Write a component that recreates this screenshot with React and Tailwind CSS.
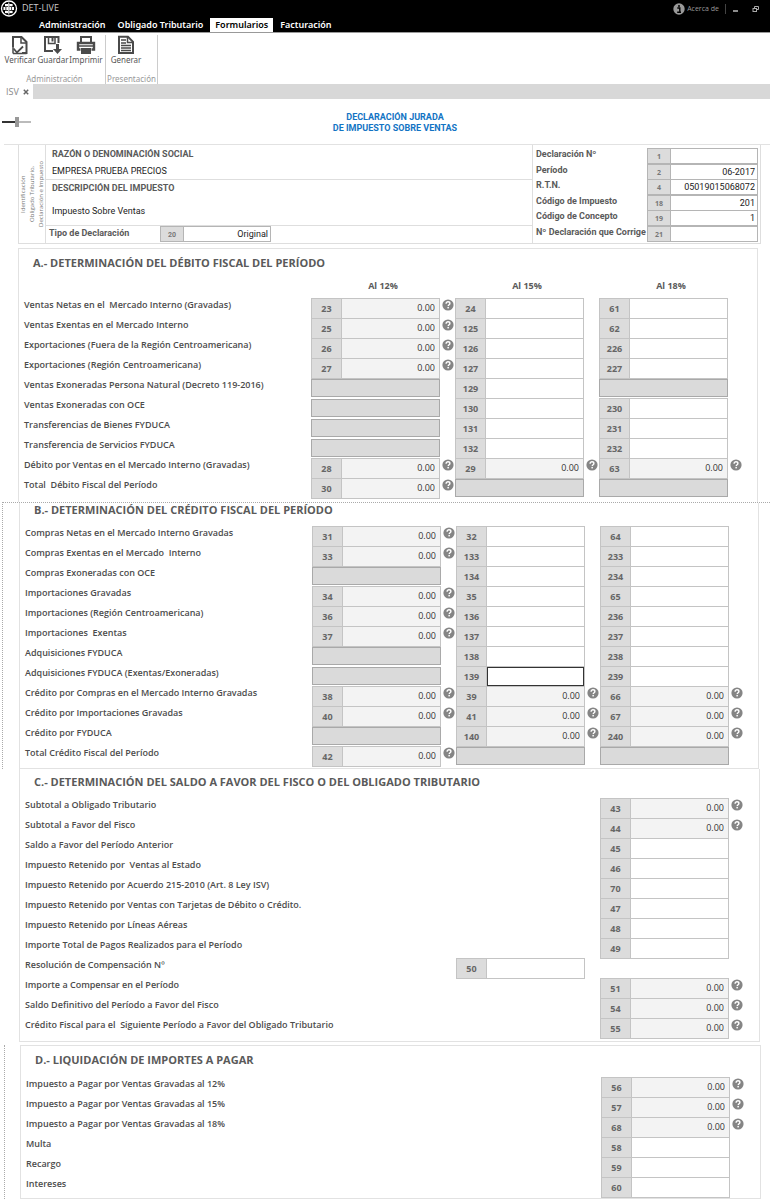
import React from "react";

/* Cell notation: "" = nothing, "X" = blocked, "24" = editable box, "23*" = calculated box with help. */
const SECTION_A = [
  ["Ventas Netas en el  Mercado Interno (Gravadas)", "23*", "24", "61"],
  ["Ventas Exentas en el Mercado Interno", "25*", "125", "62"],
  ["Exportaciones (Fuera de la Región Centroamericana)", "26*", "126", "226"],
  ["Exportaciones (Región Centroamericana)", "27*", "127", "227"],
  ["Ventas Exoneradas Persona Natural (Decreto 119-2016)", "X", "129", "X"],
  ["Ventas Exoneradas con OCE", "X", "130", "230"],
  ["Transferencias de Bienes FYDUCA", "X", "131", "231"],
  ["Transferencia de Servicios FYDUCA", "X", "132", "232"],
  ["Débito por Ventas en el Mercado Interno (Gravadas)", "28*", "29*", "63*"],
  ["Total  Débito Fiscal del Período", "30*", "X", "X"],
];

const SECTION_B = [
  ["Compras Netas en el Mercado Interno Gravadas", "31*", "32", "64"],
  ["Compras Exentas en el Mercado  Interno", "33*", "133", "233"],
  ["Compras Exoneradas con OCE", "X", "134", "234"],
  ["Importaciones Gravadas", "34*", "35", "65"],
  ["Importaciones (Región Centroamericana)", "36*", "136", "236"],
  ["Importaciones  Exentas", "37*", "137", "237"],
  ["Adquisiciones FYDUCA", "X", "138", "238"],
  ["Adquisiciones FYDUCA (Exentas/Exoneradas)", "X", "139", "239"],
  ["Crédito por Compras en el Mercado Interno Gravadas", "38*", "39*", "66*"],
  ["Crédito por Importaciones Gravadas", "40*", "41*", "67*"],
  ["Crédito por FYDUCA", "X", "140*", "240*"],
  ["Total Crédito Fiscal del Período", "42*", "X", "X"],
];

const SECTION_C = [
  ["Subtotal a Obligado Tributario", "", "", "43*"],
  ["Subtotal a Favor del Fisco", "", "", "44*"],
  ["Saldo a Favor del Período Anterior", "", "", "45"],
  ["Impuesto Retenido por  Ventas al Estado", "", "", "46"],
  ["Impuesto Retenido por Acuerdo 215-2010 (Art. 8 Ley ISV)", "", "", "70"],
  ["Impuesto Retenido por Ventas con Tarjetas de Débito o Crédito.", "", "", "47"],
  ["Impuesto Retenido por Líneas Aéreas", "", "", "48"],
  ["Importe Total de Pagos Realizados para el Período", "", "", "49"],
  ["Resolución de Compensación Nº", "", "50", ""],
  ["Importe a Compensar en el Período", "", "", "51*"],
  ["Saldo Definitivo del Período a Favor del Fisco", "", "", "54*"],
  ["Crédito Fiscal para el  Siguiente Período a Favor del Obligado Tributario", "", "", "55*"],
];

const SECTION_D = [
  ["Impuesto a Pagar por Ventas Gravadas al 12%", "", "", "56*"],
  ["Impuesto a Pagar por Ventas Gravadas al 15%", "", "", "57*"],
  ["Impuesto a Pagar por Ventas Gravadas al 18%", "", "", "68*"],
  ["Multa", "", "", "58"],
  ["Recargo", "", "", "59"],
  ["Intereses", "", "", "60"],
];

const HEADER_FIELDS = [
  ["Declaración Nº", "1", ""],
  ["Período", "2", "06-2017"],
  ["R.T.N.", "4", "05019015068072"],
  ["Código de Impuesto", "18", "201"],
  ["Código de Concepto", "19", "1"],
  ["Nº Declaración que Corrige", "21", ""],
];

function HelpIcon() {
  return (
    <svg viewBox="0 0 12 12" className="size-3">
      <circle cx="6" cy="6" r="5.6" fill="#858585" />
      <path d="M4.1 4.7C4.1 3.4 5 2.8 6 2.8s1.9.6 1.9 1.6c0 1.3-1.7 1.3-1.7 2.6" fill="none" stroke="#fff" strokeWidth="1.4" />
      <rect x="5.4" y="7.9" width="1.5" height="1.5" fill="#fff" />
    </svg>
  );
}

function Cell({ spec }) {
  if (!spec) return null;
  if (spec === "X") {
    return (
      <div className="h-5 pt-px">
        <div className="h-[18px] w-[129px] border border-[#a9a9a9] bg-[#dadada]" />
      </div>
    );
  }
  const calculated = spec.endsWith("*");
  const code = spec.replace("*", "");
  const focus = code === "139";
  return (
    <div className="flex h-[21px] items-start">
      <div className="flex h-[21px] w-[129px] border border-[#c4c4c4]">
        <label
          htmlFor={"c" + code}
          className="w-[30px] shrink-0 border-r border-[#c4c4c4] bg-[#dcdcdc] pt-px text-center text-[9px] leading-[18px] font-bold text-[#666]"
        >
          {code}
        </label>
        <input
          id={"c" + code}
          type="text"
          readOnly={calculated}
          defaultValue={calculated ? "0.00" : ""}
          className={
            "min-w-0 flex-1 pr-1 pb-0.5 text-right text-[9px] leading-4 text-[#333] outline-none " +
            (calculated ? "bg-[#f3f3f3]" : focus ? "border border-[#333] bg-white" : "bg-white")
          }
        />
      </div>
      {calculated && (
        <button type="button" aria-label={"Ayuda casilla " + code} className="mt-px ml-0.5">
          <HelpIcon />
        </button>
      )}
    </div>
  );
}

function FieldTable({ rows, columns }) {
  return (
    <table className="w-full table-fixed border-collapse">
      <colgroup>
        <col />
        <col className="w-36" />
        <col className="w-36" />
        <col className="w-36" />
      </colgroup>
      {columns && (
        <thead>
          <tr className="h-[21px] align-top text-[9px] leading-[18px]">
            <td />
            {columns.map((c) => (
              <th key={c} scope="col" className="p-0 font-bold">
                {c}
              </th>
            ))}
          </tr>
        </thead>
      )}
      <tbody>
        {rows.map(([label, ...cells]) => (
          <tr key={label} className="h-5 align-top">
            <th scope="row" className="p-0 text-left text-[9px] leading-[14px] font-semibold whitespace-pre text-[#4c4c4c]">
              {label}
            </th>
            {cells.map((c, i) => (
              <td key={i} className="h-5 p-0">
                <div className="h-5">
                  <Cell spec={c} />
                </div>
              </td>
            ))}
          </tr>
        ))}
      </tbody>
    </table>
  );
}

function HeaderBox({ id, code, value }) {
  return (
    <div className="flex h-4 w-[111px] border border-[#b5b5b5]">
      <label htmlFor={id} className="w-[23px] shrink-0 border-r border-[#b5b5b5] bg-[#dcdcdc] pt-px text-center text-[7px] leading-[14px] font-bold text-[#777]">
        {code}
      </label>
      <input id={id} type="text" defaultValue={value} className="min-w-0 flex-1 bg-white pr-0.5 text-right font-[Roboto,sans-serif] text-[9px] leading-[14px] text-[#222] outline-none" />
    </div>
  );
}

const RIBBON_ICONS = {
  Verificar: (
    <g fill="none" stroke="#4a4a4a" strokeWidth="2">
      <path d="M3 12V2h8.500l5 5v11H12" />
      <path d="M11 2v6h5.500" strokeWidth="1.500" />
      <path d="M3 18.500h13.500M3 12v6.500" strokeWidth="1.500" />
      <path d="M3.500 13.500l3.500 4 6-6" strokeWidth="1.800" />
    </g>
  ),
  Guardar: (
    <g fill="none" stroke="#4a4a4a" strokeWidth="2">
      <path d="M10 16H2V2h13.500v6" />
      <path d="M5.500 2v6.500h6.500V2" strokeWidth="1.500" />
      <path d="M9.500 3v3.500" />
      <path d="M14.500 9v7" strokeWidth="3" />
      <path d="M10 14h9l-4.500 5z" fill="#4a4a4a" stroke="none" />
    </g>
  ),
  Imprimir: (
    <g fill="none" stroke="#4a4a4a" strokeWidth="2">
      <path d="M5 7V2h10v5" />
      <path d="M4.500 14.500H2V8h16v6.500h-2.500" strokeWidth="2.400" />
      <path d="M3 11h14" strokeWidth="1.500" />
      <rect x="5" y="13" width="10" height="6" fill="#4a4a4a" stroke="none" />
    </g>
  ),
  Generar: (
    <g fill="none" stroke="#4a4a4a" strokeWidth="2">
      <path d="M3 1.800h9l5 5V18H3z" />
      <path d="M11.500 2v5.500H17" strokeWidth="1.500" />
      <path d="M5 5h5M5 8h5M5 10.500h10M5 13h10M5 15.500h10" strokeWidth="1.300" />
    </g>
  ),
};

function RibbonButton({ name, className }) {
  return (
    <button type="button" className={"flex flex-col items-center text-[8px] leading-[10px] text-[#555] " + className}>
      <svg viewBox="0 0 20 20" className="size-5">
        {RIBBON_ICONS[name]}
      </svg>
      {name}
    </button>
  );
}

export default function App() {
  return (
    <div className="min-h-screen overflow-x-hidden bg-white font-['Open_Sans','Noto_Sans',sans-serif] text-[#5a5a5a]">
      <header className="border-b border-[#999] bg-black text-white">
        <div className="flex h-[18px] items-start">
          <svg viewBox="0 0 18 18" className="h-[18px] w-[18px]">
            <circle cx="9" cy="8.500" r="7.500" fill="none" stroke="#fff" strokeWidth="1.300" />
            <g fill="#fff">
              <rect x="5" y="4" width="3.300" height="2.300" />
              <rect x="9.300" y="4" width="3.300" height="2.300" />
              <rect x="3.500" y="7" width="2" height="3" />
              <rect x="6.300" y="7" width="2" height="3" />
              <rect x="9.300" y="7" width="2" height="3" />
              <rect x="12" y="7" width="2" height="3" />
              <rect x="5" y="10.800" width="3.300" height="2.300" />
              <rect x="9.300" y="10.800" width="3.300" height="2.300" />
              <rect x="8.300" y="2.500" width="1" height="12" />
            </g>
          </svg>
          <span className="ml-1 text-[9px] leading-4 text-[#ccc]">DET-LIVE</span>
          <div className="ml-auto flex h-[18px] items-center pr-2.5 text-[#999]">
            <button type="button" className="flex items-center gap-0.5 text-[7px] leading-4">
              <svg viewBox="0 0 12 12" className="size-3">
                <circle cx="6" cy="6" r="5.700" fill="#999" />
                <path d="M4.300 5h2.500v4M4.200 9.300h3.800" fill="none" stroke="#000" strokeWidth="1.400" />
                <circle cx="6" cy="2.900" r="1" fill="#000" />
              </svg>
              Acerca de
            </button>
            <span className="mx-1.5 h-2.5 w-px bg-[#444]" />
            <button type="button" aria-label="Minimizar" className="mr-3">
              <svg viewBox="0 0 8 8" className="size-2">
                <path d="M1 6h5" stroke="#bbb" strokeWidth="1.500" />
              </svg>
            </button>
            <button type="button" aria-label="Restaurar">
              <svg viewBox="0 0 8 8" className="size-2" fill="none" stroke="#aaa">
                <path d="M2.500 3V1.500h4v3H5" />
                <rect x="1" y="3.500" width="3.500" height="3" />
              </svg>
            </button>
          </div>
        </div>
        <nav className="flex h-3.5 items-center gap-0.5 pl-[34px] font-['Noto_Sans',sans-serif] text-[9px] leading-[14px] font-semibold">
          <a href="#administracion" className="px-[5px]">Administración</a>
          <a href="#obligado" className="px-[5px]">Obligado Tributario</a>
          <a href="#formularios" className="bg-white px-[5px] text-black">Formularios</a>
          <a href="#facturacion" className="px-[5px]">Facturación</a>
        </nav>
      </header>

      <div className="flex h-[51px] pt-0.5 font-['Noto_Sans',sans-serif] text-[#999]">
        <div className="flex w-[106px] flex-col justify-between border-r border-[#ccc] pl-1">
          <div className="flex gap-0.5">
            <RibbonButton name="Verificar" className="w-8" />
            <RibbonButton name="Guardar" className="w-[30px]" />
            <RibbonButton name="Imprimir" className="w-8" />
          </div>
          <span className="text-center text-[8px] leading-[10px]">Administración</span>
        </div>
        <div className="flex w-[52px] flex-col justify-between border-r border-[#ccc]">
          <RibbonButton name="Generar" className="ml-1 w-8" />
          <span className="text-center text-[8px] leading-[10px]">Presentación</span>
        </div>
      </div>

      <div className="flex h-[15px] bg-[#d8d8d8]">
        <div className="flex w-[33px] items-center gap-1 bg-white pl-1.5 text-[9px] leading-[15px] text-[#888]">
          ISV
          <button type="button" aria-label="Cerrar ISV">
            <svg viewBox="0 0 6 6" className="size-1.5">
              <path d="M.8.8l4.400 4.400M5.200.8L.8 5.200" stroke="#666" strokeWidth="1.500" />
            </svg>
          </button>
        </div>
      </div>

      <div className="grid h-[45px] grid-cols-[30px_1fr_12px] items-center pl-0.5">
        <input
          type="range"
          aria-label="Zoom"
          defaultValue="50"
          className="h-2.5 w-[29px] appearance-none bg-transparent [&::-webkit-slider-runnable-track]:h-0.5 [&::-webkit-slider-runnable-track]:bg-linear-to-r [&::-webkit-slider-runnable-track]:from-[#333] [&::-webkit-slider-runnable-track]:from-50% [&::-webkit-slider-runnable-track]:to-[#bbb] [&::-webkit-slider-runnable-track]:to-50% [&::-webkit-slider-thumb]:-mt-1 [&::-webkit-slider-thumb]:h-2.5 [&::-webkit-slider-thumb]:w-1 [&::-webkit-slider-thumb]:appearance-none [&::-webkit-slider-thumb]:bg-[#999]"
        />
        <h1 className="pt-0.5 text-center font-[Roboto,sans-serif] text-[9px] leading-[11px] font-bold text-[#1274c4]">
          DECLARACIÓN JURADA
          <br />
          DE IMPUESTO SOBRE VENTAS
        </h1>
      </div>

      <div className="ml-1 border-t border-[#e2e2e2]">
        <section className="mr-[9px] ml-[14px] flex h-[99px] border-x border-b border-[#dedede]">
          <div className="flex w-[27px] items-center justify-center border-r border-[#dedede]">
            <p className="rotate-180 text-center text-[6px] leading-[9px] whitespace-nowrap text-[#777] [writing-mode:vertical-rl]">
              Identificación
              <br />
              Obligado Tributario,
              <br />
              Declaración e Impuesto
            </p>
          </div>
          <div className="flex min-w-0 flex-1 flex-col font-[Roboto,sans-serif] text-[9px] leading-4">
            <div className="h-[35px] border-b border-[#dedede] pl-1.5">
              <h2 className="leading-[18px] font-bold">RAZÓN O DENOMINACIÓN SOCIAL</h2>
              <p className="text-[#222]">EMPRESA PRUEBA PRECIOS</p>
            </div>
            <div className="flex h-[46px] flex-col justify-between border-b border-[#dedede] pb-1.5 pl-1.5">
              <h2 className="font-bold">DESCRIPCIÓN DEL IMPUESTO</h2>
              <p className="text-[#222]">Impuesto Sobre Ventas</p>
            </div>
            <div className="flex h-[17px] pl-[3px]">
              <label htmlFor="h20" className="w-[111px] leading-[14px] font-bold">
                Tipo de Declaración
              </label>
              <HeaderBox id="h20" code="20" value="Original" />
            </div>
          </div>
          <div className="w-[228px] border-l border-[#dedede] pt-[3px] pl-[3px]">
            <div className="grid h-[93px] grid-rows-6">
              {HEADER_FIELDS.map(([label, code, value]) => (
                <div key={code} className="flex min-h-0">
                  <label htmlFor={"h" + code} className="w-[111px] font-[Roboto,sans-serif] text-[9px] leading-3 font-bold whitespace-nowrap">
                    {label}
                  </label>
                  <HeaderBox id={"h" + code} code={code} value={value} />
                </div>
              ))}
            </div>
          </div>
        </section>
      </div>

      <section className="mt-1 mr-3 ml-[18px] h-[254px] border-x border-t border-[#e2e2e2] pr-3.5 pl-[5px]">
        <h2 className="flex h-7 items-center pl-[9px] text-[11px] font-bold">A.- DETERMINACIÓN DEL DÉBITO FISCAL DEL PERÍODO</h2>
        <FieldTable rows={SECTION_A} columns={["Al 12%", "Al 15%", "Al 18%"]} />
      </section>

      <div className="ml-0.5 border-t border-l border-dotted border-[#aaa]">
        <section className="mr-[11px] ml-4 h-[266px] border-x border-b border-[#e2e2e2] pr-3.5 pl-[5px]">
          <h2 className="mb-[9px] flex h-3.5 items-center pl-[9px] text-[11px] font-bold">B.- DETERMINACIÓN DEL CRÉDITO FISCAL DEL PERÍODO</h2>
          <FieldTable rows={SECTION_B} />
        </section>
      </div>

      <section className="mr-2.5 ml-[19px] h-[273px] border-x border-b border-[#e2e2e2] pr-[15px] pl-[5px]">
        <h2 className="mb-[3px] flex h-[26px] items-center pl-[9px] text-[11px] font-bold">C.- DETERMINACIÓN DEL SALDO A FAVOR DEL FISCO O DEL OBLIGADO TRIBUTARIO</h2>
        <FieldTable rows={SECTION_C} />
      </section>

      <div className="mt-[3px] ml-1 border-l border-dotted border-[#aaa]">
        <section className="mr-[9px] ml-[15px] border border-[#e2e2e2] pr-[15px] pb-px pl-[5px]">
          <h2 className="mb-[3px] flex h-7 items-center pl-[9px] text-[11px] font-bold">D.- LIQUIDACIÓN DE IMPORTES A PAGAR</h2>
          <FieldTable rows={SECTION_D} />
        </section>
      </div>
    </div>
  );
}
